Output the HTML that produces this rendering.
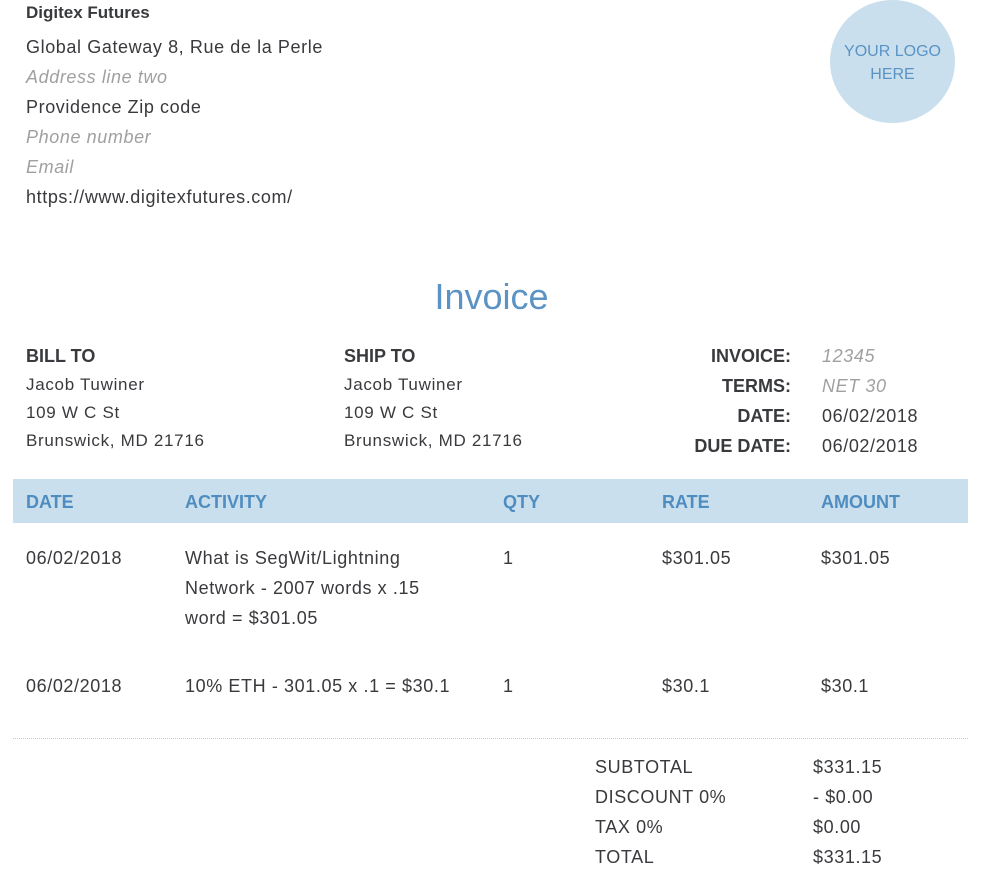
<!DOCTYPE html>
<html><head><meta charset="utf-8"><style>
body{margin:0;width:983px;height:892px;background:#fff;font-family:"Liberation Sans",sans-serif;color:#393a3d;position:relative;overflow:hidden}
.a{position:absolute;white-space:nowrap}
.g{color:#a0a0a0;font-style:italic}
.b{font-weight:bold;letter-spacing:0 !important}
.r{text-align:right}
.f18{font-size:18px;letter-spacing:0.6px}
.f17{font-size:17px;letter-spacing:0.7px}
</style></head><body>
<div class="a b" style="left:26px;top:3px;font-size:17px">Digitex Futures</div>
<div class="a f18" style="left:26px;top:37px">Global Gateway 8, Rue de la Perle</div>
<div class="a f18 g" style="left:26px;top:67px">Address line two</div>
<div class="a f18" style="left:26px;top:97px">Providence Zip code</div>
<div class="a f18 g" style="left:26px;top:127px">Phone number</div>
<div class="a f18 g" style="left:26px;top:157px">Email</div>
<div class="a f18" style="left:26px;top:187px">https://www.digitexfutures.com/</div>
<div class="a" style="left:830px;top:0;width:125px;height:123px;border-radius:50%;background:#c9dfed;color:#5a93c4;font-size:16px;text-align:center;line-height:23px;white-space:normal"><div style="padding-top:40px">YOUR LOGO<br>HERE</div></div>
<div class="a" style="left:0;width:983px;top:276px;text-align:center;font-size:36px;color:#5a93c4">Invoice</div>

<div class="a b f18" style="left:26px;top:346px">BILL TO</div>
<div class="a f17" style="left:26px;top:375px">Jacob Tuwiner</div>
<div class="a f17" style="left:26px;top:403px">109 W C St</div>
<div class="a f17" style="left:26px;top:431px">Brunswick, MD 21716</div>
<div class="a b f18" style="left:344px;top:346px">SHIP TO</div>
<div class="a f17" style="left:344px;top:375px">Jacob Tuwiner</div>
<div class="a f17" style="left:344px;top:403px">109 W C St</div>
<div class="a f17" style="left:344px;top:431px">Brunswick, MD 21716</div>

<div class="a b f18 r" style="right:192px;top:346px">INVOICE:</div>
<div class="a b f18 r" style="right:192px;top:376px">TERMS:</div>
<div class="a b f18 r" style="right:192px;top:406px">DATE:</div>
<div class="a b f18 r" style="right:192px;top:436px">DUE DATE:</div>
<div class="a f18 g" style="left:822px;top:346px">12345</div>
<div class="a f18 g" style="left:822px;top:376px">NET 30</div>
<div class="a f18" style="left:822px;top:406px">06/02/2018</div>
<div class="a f18" style="left:822px;top:436px">06/02/2018</div>

<div class="a" style="left:13px;top:479px;width:955px;height:44px;background:#c9dfed"></div>
<div class="a b f18" style="left:26px;top:492px;color:#4f8dc0">DATE</div>
<div class="a b f18" style="left:185px;top:492px;color:#4f8dc0">ACTIVITY</div>
<div class="a b f18" style="left:503px;top:492px;color:#4f8dc0">QTY</div>
<div class="a b f18" style="left:662px;top:492px;color:#4f8dc0">RATE</div>
<div class="a b f18" style="left:821px;top:492px;color:#4f8dc0">AMOUNT</div>

<div class="a f18" style="left:26px;top:548px">06/02/2018</div>
<div class="a f18" style="left:185px;top:543px;line-height:30px">What is SegWit/Lightning<br>Network - 2007 words x .15<br>word = $301.05</div>
<div class="a f18" style="left:503px;top:548px">1</div>
<div class="a f18" style="left:662px;top:548px">$301.05</div>
<div class="a f18" style="left:821px;top:548px">$301.05</div>

<div class="a f18" style="left:26px;top:676px">06/02/2018</div>
<div class="a f18" style="left:185px;top:676px">10% ETH - 301.05 x .1 = $30.1</div>
<div class="a f18" style="left:503px;top:676px">1</div>
<div class="a f18" style="left:662px;top:676px">$30.1</div>
<div class="a f18" style="left:821px;top:676px">$30.1</div>

<div class="a" style="left:13px;top:738px;width:955px;border-top:1px dotted #c8c8c8"></div>

<div class="a f18" style="left:595px;top:757px">SUBTOTAL</div>
<div class="a f18" style="left:595px;top:787px">DISCOUNT 0%</div>
<div class="a f18" style="left:595px;top:817px">TAX 0%</div>
<div class="a f18" style="left:595px;top:847px">TOTAL</div>
<div class="a f18" style="left:813px;top:757px">$331.15</div>
<div class="a f18" style="left:813px;top:787px">- $0.00</div>
<div class="a f18" style="left:813px;top:817px">$0.00</div>
<div class="a f18" style="left:813px;top:847px">$331.15</div>
</body></html>
